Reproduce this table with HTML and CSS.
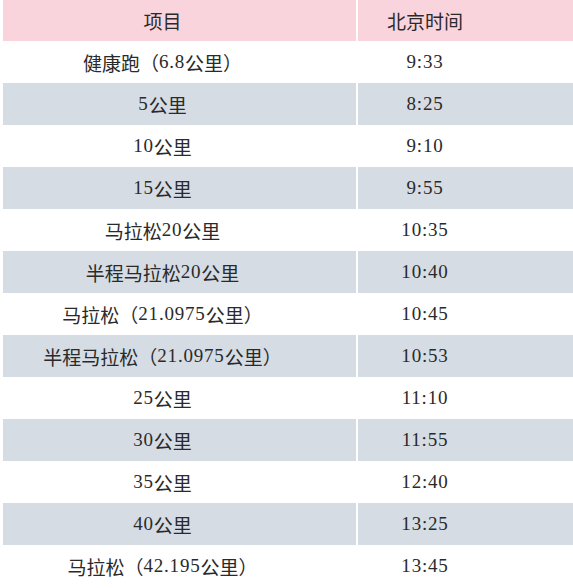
FILE: index.html
```html
<!DOCTYPE html>
<html lang="zh-CN">
<head>
<meta charset="utf-8">
<title>比赛时间</title>
<link rel="stylesheet" href="styles.css">
</head>
<body>
<div class="table">
  <div class="row head"><div class="c1">项目</div><div class="c2">北京时间</div></div>
  <div class="row"><div class="c1">健康跑（<span class="n">6.8</span>公里）</div><div class="c2">9:33</div></div>
  <div class="row alt"><div class="c1"><span class="n">5</span>公里</div><div class="c2">8:25</div></div>
  <div class="row"><div class="c1"><span class="n">10</span>公里</div><div class="c2">9:10</div></div>
  <div class="row alt"><div class="c1"><span class="n">15</span>公里</div><div class="c2">9:55</div></div>
  <div class="row"><div class="c1">马拉松<span class="n">20</span>公里</div><div class="c2">10:35</div></div>
  <div class="row alt"><div class="c1">半程马拉松<span class="n">20</span>公里</div><div class="c2">10:40</div></div>
  <div class="row"><div class="c1">马拉松（<span class="n">21.0975</span>公里）</div><div class="c2">10:45</div></div>
  <div class="row alt"><div class="c1">半程马拉松（<span class="n">21.0975</span>公里）</div><div class="c2">10:53</div></div>
  <div class="row"><div class="c1"><span class="n">25</span>公里</div><div class="c2">11:10</div></div>
  <div class="row alt"><div class="c1"><span class="n">30</span>公里</div><div class="c2">11:55</div></div>
  <div class="row"><div class="c1"><span class="n">35</span>公里</div><div class="c2">12:40</div></div>
  <div class="row alt"><div class="c1"><span class="n">40</span>公里</div><div class="c2">13:25</div></div>
  <div class="row"><div class="c1">马拉松（<span class="n">42.195</span>公里）</div><div class="c2">13:45</div></div>
</div>
</body>
</html>
```
FILE: styles.css
```css
html, body {
  margin: 0;
  padding: 0;
  background: #ffffff;
}
.table {
  width: 573px;
  height: 588px;
  padding-left: 3px;
  box-sizing: border-box;
  display: flex;
  flex-direction: column;
  font-family: "Liberation Serif", "Noto Sans CJK SC", serif;
  font-size: 19px;
  color: #2a2a2a;
}
.row {
  display: grid;
  grid-template-columns: 353px 215px;
  column-gap: 2px;
  height: 42px;
}
.row.head {
  height: 41px;
}
.row > div {
  display: flex;
  align-items: center;
  justify-content: center;
  white-space: nowrap;
}
.c1 {
  padding-right: 34px;
}
.c2 {
  padding-right: 81px;
  letter-spacing: 0.8px;
}
.head .c2 {
  letter-spacing: 0;
}
.n {
  letter-spacing: 0.8px;
}
.head > div {
  background: #fad4dc;
}
.alt > div {
  background: #d5dce4;
}
```
